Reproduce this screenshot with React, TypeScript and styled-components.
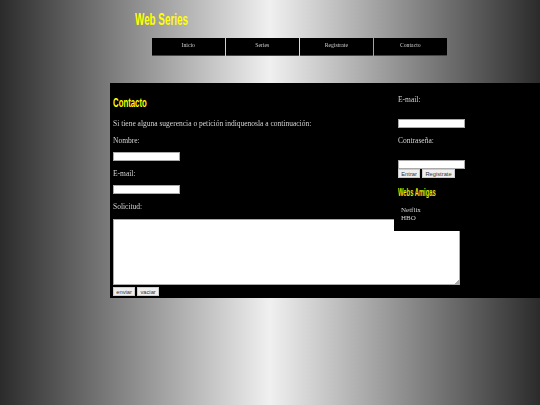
import styled, { createGlobalStyle } from 'styled-components';

const GlobalStyle = createGlobalStyle`
  html, body {
    margin: 0;
    padding: 0;
  }
  body {
    font-family: 'Liberation Serif', serif;
    overflow: hidden;
  }
`;

const Page = styled.div`
  width: 540px;
  height: 405px;
  overflow: hidden;
  background: linear-gradient(to right, #2b2b2b 0%, #f0f0f0 50%, #2b2b2b 100%);
`;

const Header = styled.header`
  height: 83px;
  padding: 11px 0 0 135px;
  box-sizing: border-box;
`;

const Logo = styled.h1`
  margin: 0;
  height: 27px;
  font-family: 'Liberation Sans', sans-serif;
  font-size: 17px;
  line-height: 17px;
  font-weight: bold;
  color: #ffff00;
  transform: scaleX(0.58);
  transform-origin: left center;
`;

const Nav = styled.nav`
  display: flex;
  gap: 1.5px;
  margin-left: 17px;
`;

const NavItem = styled.a`
  width: 72.6px;
  height: 18px;
  padding-top: 3px;
  box-sizing: border-box;
  background: #000;
  border-bottom: 1px solid #444;
  text-align: center;
`;

// own layer so the small text is antialiased in grey, not in subpixel colours
const NavLabel = styled.span`
  display: block;
  color: #ccc;
  font-size: 5.75px;
  line-height: 8px;
  will-change: transform;
`;

const Panel = styled.main`
  position: relative;
  margin-left: 110px;
  width: 430px;
  height: 215px;
  padding: 13px 0 0 3px;
  box-sizing: border-box;
  background: #000;
  color: #d4d4d4;
  font-size: 7.5px;
`;

const Heading = styled.h2`
  margin: 0;
  font-family: 'Liberation Sans', sans-serif;
  font-size: 12px;
  line-height: 14px;
  font-weight: bold;
  color: #ffff00;
  transform: scaleX(0.65);
  transform-origin: left center;
`;

const Line = styled.p<{ $top: number }>`
  height: 10px;
  margin: ${({ $top }) => $top}px 0 0;
  padding-top: 1px;
  box-sizing: border-box;
  line-height: 10px;
  will-change: transform;
`;

const Field = styled.input<{ $top: number }>`
  display: block;
  width: 67px;
  height: 9px;
  margin: ${({ $top }) => $top}px 0 0;
  padding: 0;
  box-sizing: border-box;
  border: 1px solid #aaa;
  border-radius: 0;
  background: #fff;
  outline: none;
`;

const Message = styled.textarea`
  display: block;
  width: 347px;
  height: 66px;
  margin: 8px 0 0;
  padding: 0;
  box-sizing: border-box;
  border: 1px solid #aaa;
  border-radius: 0;
  background: #fff;
  outline: none;

  &::-webkit-resizer {
    background: linear-gradient(135deg, transparent 85%, #aaa 85%);
  }
`;

const Buttons = styled.div<{ $top: number }>`
  display: flex;
  gap: 2px;
  margin-top: ${({ $top }) => $top}px;
`;

const Action = styled.button`
  height: 9px;
  padding: 0 2.25px;
  box-sizing: border-box;
  border: 1px solid #ccc;
  border-radius: 0;
  background: #efefef;
  color: #333;
  font-family: 'Liberation Sans', sans-serif;
  font-size: 5.75px;
  line-height: 6px;
`;

const Sidebar = styled.aside`
  position: absolute;
  left: 284px;
  top: 0;
  width: 76px;
  height: 148px;
  padding: 11px 0 0 4px;
  box-sizing: border-box;
  background: #000;
`;

const SideHeading = styled.h3`
  margin: 9px 0 0;
  font-family: 'Liberation Sans', sans-serif;
  font-size: 10px;
  line-height: 12px;
  font-weight: bold;
  color: #e8e800;
  white-space: nowrap;
  transform: scaleX(0.58);
  transform-origin: left center;
`;

const Friends = styled.ul`
  list-style: none;
  margin: 7px 0 0;
  padding: 0 0 0 3px;
  font-size: 7px;
  line-height: 8px;
  will-change: transform;
`;

export default function App() {
  return (
    <>
      <GlobalStyle />
      <Page>
        <Header>
          <Logo>Web Series</Logo>
          <Nav>
            <NavItem><NavLabel>Inicio</NavLabel></NavItem>
            <NavItem><NavLabel>Series</NavLabel></NavItem>
            <NavItem><NavLabel>Registrate</NavLabel></NavItem>
            <NavItem><NavLabel>Contacto</NavLabel></NavItem>
          </Nav>
        </Header>
        <Panel>
          <Heading>Contacto</Heading>
          <Line $top={8}>Si tiene alguna sugerencia o petición indiquenosla a continuación:</Line>
          <Line $top={7}>Nombre:</Line>
          <Field $top={7} />
          <Line $top={7}>E-mail:</Line>
          <Field $top={7} />
          <Line $top={7}>Solicitud:</Line>
          <Message />
          <Buttons $top={2}>
            <Action>enviar</Action>
            <Action>vaciar</Action>
          </Buttons>
          <Sidebar>
            <Line $top={0}>E-mail:</Line>
            <Field $top={15} />
            <Line $top={7}>Contraseña:</Line>
            <Field $top={15} />
            <Buttons $top={0}>
              <Action>Entrar</Action>
              <Action>Registrate</Action>
            </Buttons>
            <SideHeading>Webs Amigas</SideHeading>
            <Friends>
              <li>Netflix</li>
              <li>HBO</li>
            </Friends>
          </Sidebar>
        </Panel>
      </Page>
    </>
  );
}
